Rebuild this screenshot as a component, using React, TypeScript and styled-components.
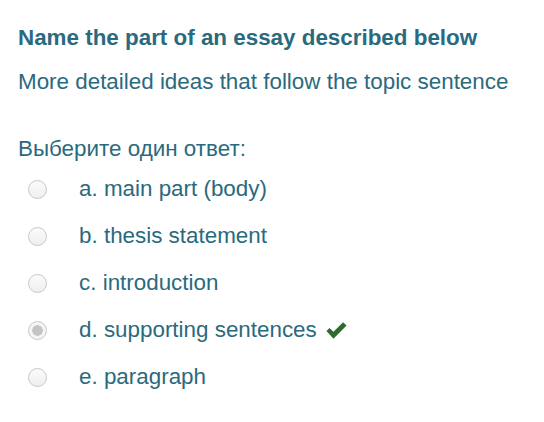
import React, { FC } from 'react';
import styled, { createGlobalStyle } from 'styled-components';

const GlobalStyle = createGlobalStyle`
  body {
    margin: 0;
    background: #fff;
    font-family: 'Liberation Sans', Arial, sans-serif;
  }
`;

const options = [
  { key: 'a', label: 'main part (body)' },
  { key: 'b', label: 'thesis statement' },
  { key: 'c', label: 'introduction' },
  { key: 'd', label: 'supporting sentences', checked: true },
  { key: 'e', label: 'paragraph' },
];

const App: FC = () => (
  <>
    <GlobalStyle />
    <Container>
      <Title>Name the part of an essay described below</Title>
      <Question>More detailed ideas that follow the topic sentence</Question>
      <Prompt>Выберите один ответ:</Prompt>
      <Answers>
        {options.map(o => (
          <Row key={o.key}>
            <Radio checked={!!o.checked} />
            <Label>
              {o.key}. {o.label}
              {o.checked && (
                <Check viewBox="0 0 24 19">
                  <path d="M0.5 10 L4 6.5 L8.5 11 L19.5 0 L23.5 3.8 L8.5 18.8 Z" fill="#2f6b2f" />
                </Check>
              )}
            </Label>
          </Row>
        ))}
      </Answers>
    </Container>
  </>
);

const Container = styled.div`
  padding: 25px 18px;
  color: #2a6a7e;
  font-size: 22.4px;
  line-height: 26px;
`;

const Title = styled.div`
  font-weight: bold;
`;

const Question = styled.div`
  margin-top: 18px;
`;

const Prompt = styled.div`
  margin-top: 41px;
`;

const Answers = styled.div`
  display: flex;
  flex-direction: column;
  gap: 21px;
  margin-top: 14px;
`;

const Row = styled.div`
  display: flex;
  align-items: center;
  height: 26px;
`;

const Radio = styled.span<{ checked: boolean }>`
  box-sizing: border-box;
  width: 19px;
  height: 19px;
  margin-left: 10px;
  margin-right: 32px;
  border-radius: 50%;
  border: 1px solid #c8c8c8;
  background: ${p =>
    p.checked
      ? 'radial-gradient(circle, #c4c4c4 0 5px, #f4f4f4 5.5px)'
      : 'linear-gradient(#fbfbfb, #efefef)'};
`;

const Label = styled.span`
  display: flex;
  align-items: center;
`;

const Check = styled.svg`
  width: 21px;
  height: 17px;
  margin-left: 9px;
`;

export default App;
